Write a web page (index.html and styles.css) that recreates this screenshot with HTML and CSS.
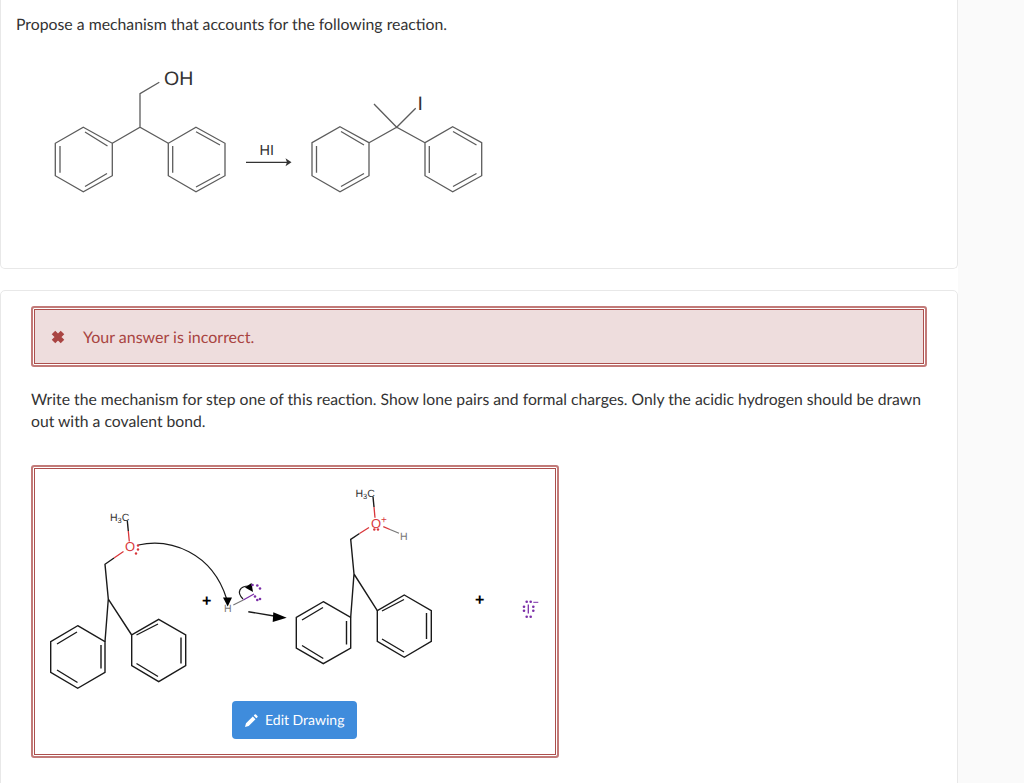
FILE: index.html
```html
<!DOCTYPE html>
<html lang="en">
<head>
<meta charset="utf-8">
<title>Mechanism question</title>
<link rel="stylesheet" href="styles.css">
</head>
<body>
<main class="main">
  <section class="card card-top">
    <p class="text">Propose a mechanism that accounts for the following reaction.</p>
    <svg class="scheme" width="460" height="150" viewBox="40 60 460 150">
      <g class="gray-bonds">
        <polygon points="83.3,127.3 112.3,143.3 112.3,175.7 83.3,191.7 55.3,175.7 55.3,143.3"/>
        <path d="M85 132 L107.5 146 M60 146 V172.7 M85 186.5 L107 173.5"/>
        <polygon points="196,127.3 225,143.3 225,175.7 196,191.7 168.3,175.7 168.3,143.3"/>
        <path d="M172.7 146 V172.7 M196 131.7 L220 145 M196 187 L220 174"/>
        <path d="M159.3 82.3 L140 93.7 V127.3 M112.3 143.3 L140 127.3 L168.3 143.3"/>
        <polygon points="340,126.7 369,142.7 369,175.7 340,191.7 312,175.7 312,142.7"/>
        <path d="M316.5 146 V172.7 M341 131.5 L364 145 M341 186.5 L364 173.5"/>
        <polygon points="452.7,126.7 481.7,142.7 481.7,175.7 452.7,191.7 425,175.7 425,142.7"/>
        <path d="M429.3 146 V173 M453 131.5 L476.5 145 M453 186.5 L476.5 173.5"/>
        <path d="M369 142.7 L396.7 127.3 L425 142.7 M374 104 L396.7 127.3 L415.7 108.3"/>
        <path class="reagent-line" d="M246 162.3 H289"/>
      </g>
      <polygon class="reagent-head" points="291.500,162.300 285.500,158.300 287,162.300 285.500,166.300"/>
      <text class="atom-lg" x="164" y="85">OH</text>
      <text class="atom-lg" x="417.500" y="110">I</text>
      <text class="atom-md" x="259.500" y="155">HI</text>
    </svg>
  </section>

  <section class="card card-answer">
    <div class="alert">
      <svg class="alert-icon" width="14" height="14" viewBox="0 0 14 14">
        <path d="M2.500 2.500 L11.500 11.500 M11.500 2.500 L2.500 11.500"/>
      </svg>
      <span class="alert-text">Your answer is incorrect.</span>
    </div>
    <p class="text prompt">Write the mechanism for step one of this reaction. Show lone pairs and formal charges. Only the acidic hydrogen should be drawn out with a covalent bond.</p>
    <div class="drawing">
      <svg class="drawing-art" width="524" height="289" viewBox="33 467 524 289">
        <g class="bonds">
          <polygon points="77.7,625.7 105,641.7 105,672.3 77.7,688.3 50.7,672.300 50.7,641.700"/>
          <path d="M57 644 L77 632 M101 645 V668.500 M57 670 L77.500 682.500"/>
          <polygon points="158.7,619.3 185.7,635 185.7,665.7 158.7,681.7 131.7,665.7 131.7,635"/>
          <path d="M136.500 635 L158 624 M181 637.500 V663.500 M136.500 663.500 L158 676.500"/>
          <path d="M105 641.700 L108.300 599 L131.700 635 M108.300 599 L105 564.300 L114 558"/>
          <path d="M127.300 520.700 L128.300 531"/>

          <polygon points="323.300,601.700 350.700,617.300 350.700,648 323.300,663.700 296.300,648 296.300,617.300"/>
          <path d="M302 620 L323 607.500 M346.500 621 V644.500 M302 645.500 L323.300 658.500"/>
          <polygon points="404.300,595 431.300,610.700 431.300,641.300 404.300,657.300 377.300,641.300 377.300,610.700"/>
          <path d="M382 611 L404 599.500 M426.500 613 V639 M382 639 L404 652"/>
          <path d="M350.700 617.300 L354 574 L377.300 610.700 M354 574 L350.700 539.300 L359.500 533.500"/>
          <path d="M373 496.700 L374 507"/>

          <path class="thin" d="M138.300 545 C170 538 212 552 226.700 599"/>
          <path d="M248.300 611.700 L274 616"/>
          <path class="thin" d="M243 599 C236 592 240 586 249 586"/>
        </g>
        <g class="red-bonds">
          <path d="M128.300 531 L129.300 541.500 M114 558 L123.500 551.500"/>
          <path d="M374 507 L375 517.700 M359.500 533.500 L369 527.500 M383.300 526.700 L390 529.500"/>
        </g>
        <path class="gray-line" d="M390 529.500 L399 533.300 M233.300 605 L243.300 600"/>
        <path class="purple-line" d="M243.300 600 L254 594 M528.300 604.500 V613.500"/>
        <path class="purple-line-thin" d="M533.300 602.300 H538.300"/>
        <polygon class="ink" points="223,597.500 232,597.500 227.700,606.500"/>
        <polygon class="ink" points="273.300,612.200 286.700,617.700 272.700,622"/>
        <polygon class="ink" points="245,587.500 251.500,583 253,592"/>

        <g class="red-dots">
          <circle cx="138" cy="545.500" r="1.200"/><circle cx="138" cy="549.500" r="1.200"/><circle cx="136" cy="553.500" r="1.200"/>
          <circle cx="374.300" cy="529.500" r="1.200"/><circle cx="378" cy="529.500" r="1.200"/>
        </g>
        <g class="purple-dots">
          <circle cx="252.500" cy="585" r="1.300"/><circle cx="257.300" cy="585.500" r="1.300"/><circle cx="260" cy="588.500" r="1.300"/>
          <circle cx="255" cy="596.500" r="1.300"/><circle cx="257.300" cy="600" r="1.300"/><circle cx="260" cy="599" r="1.300"/>
          <circle cx="526.700" cy="601.700" r="1.300"/><circle cx="530.700" cy="601.700" r="1.300"/>
          <circle cx="524" cy="606.700" r="1.300"/><circle cx="524" cy="610.700" r="1.300"/>
          <circle cx="533.300" cy="606.700" r="1.300"/><circle cx="533.300" cy="610.700" r="1.300"/>
          <circle cx="526.700" cy="616.700" r="1.300"/><circle cx="530.700" cy="616.700" r="1.300"/>
        </g>

        <text class="label" x="110" y="520.500">H<tspan class="sub" dy="2">3</tspan><tspan dy="-2">C</tspan></text>
        <text class="label" x="355.500" y="496.500">H<tspan class="sub" dy="2">3</tspan><tspan dy="-2">C</tspan></text>
        <text class="oxygen" x="125" y="551">O</text>
        <text class="oxygen" x="371" y="528">O</text>
        <text class="charge-red" x="381" y="523">+</text>
        <text class="label-gray" x="400" y="539.500">H</text>
        <text class="label-gray" x="224" y="612">H</text>
        <text class="plus" x="202" y="606">+</text>
        <text class="plus" x="475" y="605">+</text>
      </svg>
      <button class="edit-btn" type="button">
        <svg class="pencil" width="13" height="13" viewBox="0 0 13 13">
          <path d="M0 13 L1 9.300 L7.800 2.500 L10.500 5.200 L3.700 12 Z M8.700 1.600 L9.700 .6 Q10.300 0 11 .6 L12.400 2 Q13 2.700 12.400 3.300 L11.400 4.300 Z"/>
        </svg>
        Edit Drawing
      </button>
    </div>
  </section>
</main>
</body>
</html>
```
FILE: styles.css
```css
* { box-sizing: border-box; }

html, body {
  margin: 0;
  height: 100%;
  overflow: hidden;
  background: #fafafa;
}

body {
  font-family: Lato, "Open Sans", sans-serif;
  font-size: 15.800px;
  line-height: 22px;
  color: #333;
  text-rendering: geometricPrecision;
}

.main {
  width: 958px;
  height: 783px;
  background: #fff;
  overflow: hidden;
}

.card {
  background: #fff;
  border: 1px solid #e8e8e8;
}

.card-top {
  height: 269px;
  border-top: 0;
  border-radius: 0 0 5px 5px;
  padding: 14px 15px 0;
}

.card-answer {
  height: 520px;
  margin-top: 21px;
  border-radius: 5px 5px 0 0;
  padding: 15px 30px 0;
}

.text { margin: 0; }

.scheme {
  display: block;
  margin: 24px 0 0 24px;
}

.gray-bonds {
  fill: none;
  stroke: #5c5c5c;
  stroke-width: 1.3;
}

.reagent-line { stroke: #333; }
.reagent-head { fill: #333; }

.atom-lg {
  font: 19.500px "Liberation Sans", Arial, sans-serif;
  fill: #333;
}

.atom-md {
  font: 14.500px "Liberation Sans", Arial, sans-serif;
  fill: #333;
}

.alert {
  display: flex;
  align-items: center;
  gap: 18px;
  height: 60px;
  height: 61px;
  padding-left: 18px;
  background: #eedddd;
  border: 2px solid #c27a78;
  border-radius: 3px;
  box-shadow: inset 0 0 0 1px #fff, inset 0 0 0 2px #ad4f4d;
  color: #a94442;
}

.alert-text {
  padding-top: 3px;
  font-size: 16px;
}

.alert-icon {
  flex: none;
  fill: none;
  stroke: #a94442;
  stroke-width: 5;
}

.prompt {
  margin-top: 22px;
  font-size: 15.730px;
}

.drawing {
  display: grid;
  width: 528px;
  height: 293px;
  margin-top: 32px;
  border: 2px solid #c27a78;
  border-radius: 3px;
  box-shadow: inset 0 0 0 1px #fff, inset 0 0 0 2px #ad4f4d;
}

.drawing-art {
  grid-area: 1 / 1;
  display: block;
}

.bonds {
  fill: none;
  stroke: #1a1a1a;
  stroke-width: 1.4;
}

.bonds .thin { stroke-width: 1.2; }

.red-bonds {
  fill: none;
  stroke: #d9363a;
  stroke-width: 1.3;
}

.gray-line {
  fill: none;
  stroke: #777;
  stroke-width: 1.2;
}

.purple-line {
  fill: none;
  stroke: #7b2fa8;
  stroke-width: 1.3;
}

.purple-line-thin {
  fill: none;
  stroke: #7b2fa8;
  stroke-width: 1;
}

.ink { fill: #000; }
.red-dots { fill: #d9363a; }
.purple-dots { fill: #7b2fa8; }

.label {
  font: 10.500px "Liberation Sans", Arial, sans-serif;
  fill: #333;
}

.label .sub { font-size: 7.500px; }

.label-gray {
  font: 10.500px "Liberation Sans", Arial, sans-serif;
  fill: #777;
}

.oxygen {
  font: 13px "Liberation Sans", Arial, sans-serif;
  fill: #d9363a;
}

.charge-red {
  font: 10px "Liberation Sans", Arial, sans-serif;
  fill: #d9363a;
}

.plus {
  font: bold 16px "Liberation Sans", Arial, sans-serif;
  fill: #000;
}

.edit-btn {
  grid-area: 1 / 1;
  align-self: start;
  justify-self: start;
  display: flex;
  align-items: center;
  gap: 7px;
  width: 125px;
  height: 38px;
  margin: 234px 0 0 199px;
  padding: 0 0 0 13px;
  background: #3f8cdc;
  border: 0;
  border-radius: 4px;
  color: #fff;
  font: 14px/1 Lato, "Open Sans", sans-serif;
  text-rendering: geometricPrecision;
}

.pencil {
  flex: none;
  fill: #fff;
}
```
